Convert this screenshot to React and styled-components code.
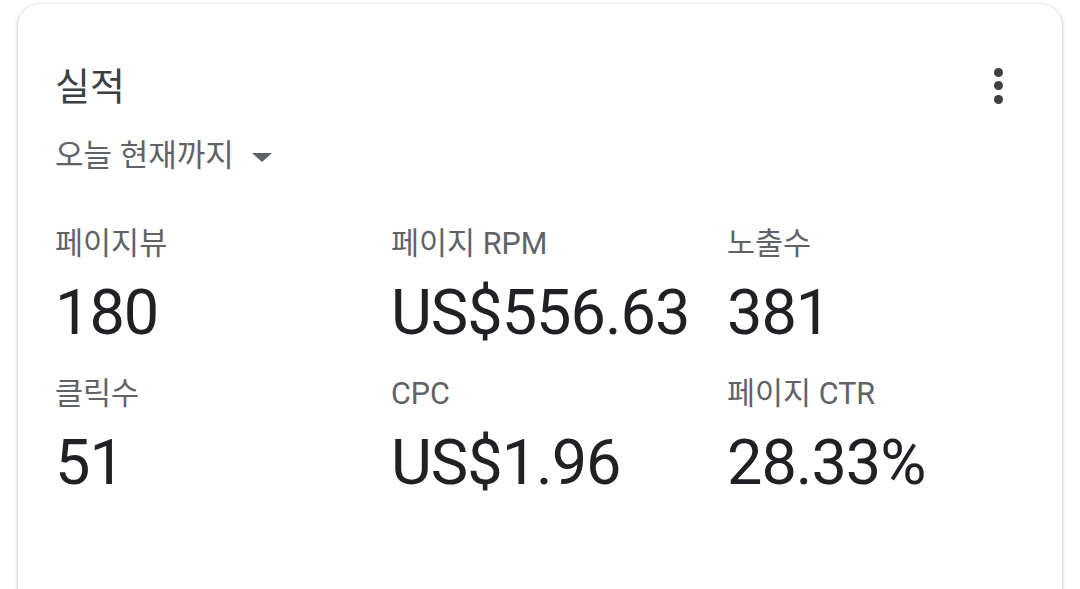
import React from 'react'
import styled, { createGlobalStyle } from 'styled-components'

const GlobalStyle = createGlobalStyle`
    body {
        margin: 0;
        background: #fff;
        font-family: Roboto, "Noto Sans CJK KR", sans-serif;
    }
`

const Page = styled.div`
    width: 1080px;
    height: 589px;
    overflow: hidden;
    padding: 4px 18px 0 18px;
    box-sizing: border-box;
`

const Card = styled.div`
    background: #fff;
    border-radius: 22px;
    box-shadow: 0 1px 3px rgba(60, 64, 67, 0.3), 0 1px 4px 1px rgba(60, 64, 67, 0.12);
    height: 640px;
    padding: 57px 37px 0 37px;
    box-sizing: border-box;
`

const Header = styled.div`
    display: flex;
    justify-content: space-between;
    align-items: flex-start;
`

const Title = styled.h2`
    margin: 0;
    font-size: 38px;
    font-weight: 400;
    line-height: 52px;
    color: #3c4043;
`

const MoreButton = styled.button`
    border: none;
    background: none;
    padding: 0;
    margin: 7px 22px 0 0;
    display: flex;
    flex-direction: column;
    gap: 4.3px;
    cursor: pointer;
`

const Dot = styled.span`
    width: 9px;
    height: 9px;
    border-radius: 50%;
    background: #3c4043;
`

const Range = styled.div`
    display: flex;
    align-items: center;
    gap: 18px;
    margin-top: 21px;
    font-size: 31px;
    line-height: 44px;
    color: #5f6368;
`

const Caret = styled.span`
    width: 0;
    height: 0;
    margin-top: 2px;
    border-left: 10.5px solid transparent;
    border-right: 10.5px solid transparent;
    border-top: 9px solid #5f6368;
`

const Grid = styled.div`
    display: grid;
    grid-template-columns: 336px 336px 1fr;
    row-gap: 22px;
    margin-top: 47px;
`

const Metric = styled.div`
    display: flex;
    flex-direction: column;
`

const Label = styled.div`
    font-size: 30.5px;
    line-height: 38px;
    color: #5f6368;
    white-space: nowrap;
`

const Value = styled.div`
    font-size: 63px;
    line-height: 80px;
    margin-top: 10px;
    color: #202124;
    white-space: nowrap;
    letter-spacing: -1px;
`

const metrics = [
    { label: '페이지뷰', value: '180' },
    { label: '페이지 RPM', value: 'US$556.63' },
    { label: '노출수', value: '381' },
    { label: '클릭수', value: '51' },
    { label: 'CPC', value: 'US$1.96' },
    { label: '페이지 CTR', value: '28.33%' },
]

const App = () => {
    return (
        <Page>
            <GlobalStyle />
            <Card>
                <Header>
                    <Title>실적</Title>
                    <MoreButton aria-label="더보기">
                        <Dot />
                        <Dot />
                        <Dot />
                    </MoreButton>
                </Header>
                <Range>
                    오늘 현재까지
                    <Caret />
                </Range>
                <Grid>
                    {metrics.map((m) => (
                        <Metric key={m.label}>
                            <Label>{m.label}</Label>
                            <Value>{m.value}</Value>
                        </Metric>
                    ))}
                </Grid>
            </Card>
        </Page>
    )
}

export default App
